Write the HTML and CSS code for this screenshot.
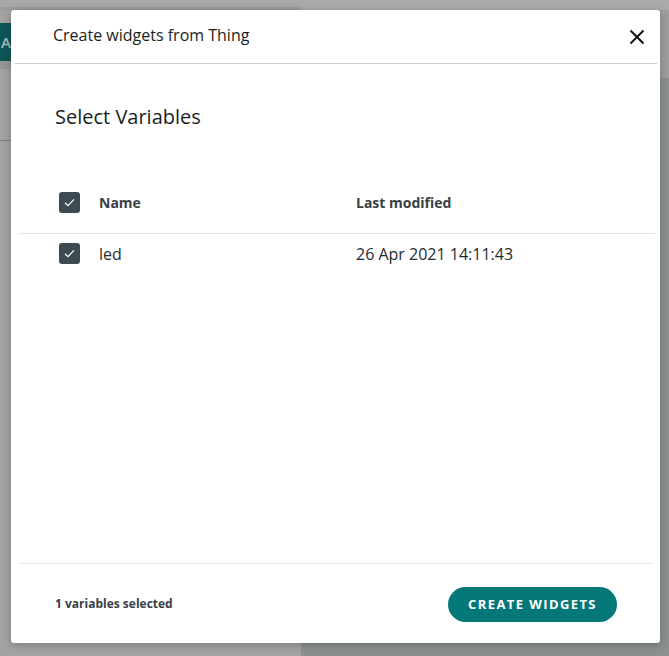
FILE: index.html
```html
<!DOCTYPE html>
<html lang="en">
<head>
<meta charset="utf-8">
<title>Create widgets from Thing</title>
<link rel="stylesheet" href="styles.css">
</head>
<body>
<div class="app">
  <aside class="side">
    <div class="side-top"></div>
    <div class="side-bar"><span class="side-btn">A</span></div>
    <div class="side-band"></div>
    <div class="side-sec"></div>
  </aside>
  <main class="main">
    <div class="main-top"></div>
    <div class="main-bar"></div>
  </main>
</div>

<div class="modal" role="dialog">
  <header class="modal-head">
    <h1 class="modal-title">Create widgets from Thing</h1>
    <button class="close" aria-label="Close">
      <svg width="16" height="16" viewBox="0 0 16 16"><path d="M1.5 1.5 L14.5 14.5 M14.5 1.5 L1.5 14.5" stroke="#111" stroke-width="2" fill="none"/></svg>
    </button>
  </header>
  <div class="head-rule"></div>

  <section class="modal-body">
    <h2 class="section-title">Select Variables</h2>
    <div class="table">
      <div class="row row-head">
        <div class="cell cell-name">
          <span class="check"><svg width="21" height="21" viewBox="0 0 21 21"><path d="M6 10.8 L9 13.6 L15 7.4" stroke="#fff" stroke-width="1.2" fill="none"/></svg></span>
          <span>Name</span>
        </div>
        <div class="cell cell-date">Last modified</div>
      </div>
      <div class="row row-data">
        <div class="cell cell-name">
          <span class="check"><svg width="21" height="21" viewBox="0 0 21 21"><path d="M6 10.8 L9 13.6 L15 7.4" stroke="#fff" stroke-width="1.2" fill="none"/></svg></span>
          <span>led</span>
        </div>
        <div class="cell cell-date">26 Apr 2021 14:11:43</div>
      </div>
    </div>
  </section>

  <footer class="modal-foot">
    <span class="count">1 variables selected</span>
    <button class="primary">CREATE WIDGETS</button>
  </footer>
</div>
</body>
</html>
```

FILE: styles.css
```css
* { box-sizing: border-box; }
html, body { margin: 0; padding: 0; }
body {
  width: 669px;
  height: 656px;
  overflow: hidden;
  font-family: "Open Sans", "Noto Sans", sans-serif;
  background: #8b9090;
  position: relative;
}

/* dimmed background app */
.app { display: flex; height: 656px; }
.side {
  width: 301px;
  background: #a3a3a3;
  display: flex;
  flex-direction: column;
}
.side-top { height: 10px; background: #a8a8a8; border-bottom: 3px solid #9c9c9c; }
.side-bar { height: 51px; display: flex; align-items: flex-end; }
.side-btn {
  width: 11px;
  height: 38px;
  background: #0c5656;
  color: #a9bcbc;
  font-size: 15px;
  font-weight: 600;
  display: flex;
  align-items: center;
  justify-content: flex-end;
  overflow: hidden;
}
.side-band { height: 8px; background: #969696; }
.side-sec { height: 72px; border-bottom: 1px solid #7e8583; }
.main { flex: 1; display: flex; flex-direction: column; }
.main-top { height: 10px; background: #aaaaaa; }
.main-bar { height: 68px; background: #9e9e9e; }

/* modal */
.modal {
  position: absolute;
  left: 11px;
  top: 10px;
  width: 649px;
  height: 633px;
  background: #fff;
  border-radius: 3px;
  box-shadow: 0 2px 10px rgba(0,0,0,0.25);
  display: flex;
  flex-direction: column;
}
.modal-head {
  height: 53px;
  padding: 0 15px 0 42px;
  display: flex;
  align-items: center;
  justify-content: space-between;
}
.modal-title {
  margin: 0 0 3px 0;
  font-size: 16px;
  font-weight: 400;
  color: #1b1e20;
}
.close {
  border: 0;
  background: none;
  padding: 0;
  width: 16px;
  height: 16px;
  display: flex;
}
.head-rule { height: 1px; background: #c5cfce; margin: 0 3px 0 4px; }

.modal-body { flex: 1; display: flex; flex-direction: column; }
.section-title {
  margin: 39px 0 0 44px;
  font-size: 20px;
  line-height: 28px;
  font-weight: 400;
  color: #1b1e20;
}
.table { margin: 41px 5px 0 8px; }
.row { display: flex; align-items: center; }
.row-head {
  height: 62px;
  border-bottom: 1px solid #dfe5e5;
  font-size: 14px;
  font-weight: 700;
  color: #374146;
}
.row-data {
  height: 39px;
  font-size: 16px;
  color: #1f2a30;
}
.cell-name {
  width: 337px;
  padding-left: 40px;
  display: flex;
  align-items: center;
  gap: 19px;
}
.check {
  width: 21px;
  height: 21px;
  border-radius: 3px;
  background: #3d4a52;
  display: flex;
}

.modal-foot {
  height: 80px;
  margin: 0 7px 0 8px;
  border-top: 1px solid #e1e4e4;
  padding: 0 36px;
  display: flex;
  align-items: center;
  justify-content: space-between;
}
.count {
  font-size: 12px;
  font-weight: 700;
  color: #374146;
}
.primary {
  width: 169px;
  height: 35px;
  border: 0;
  border-radius: 18px;
  background: #047878;
  color: #fff;
  font-family: "Open Sans", "Noto Sans", sans-serif;
  font-size: 13px;
  font-weight: 700;
  letter-spacing: 1.4px;
  padding: 0;
  margin-top: 1px;
}
```
